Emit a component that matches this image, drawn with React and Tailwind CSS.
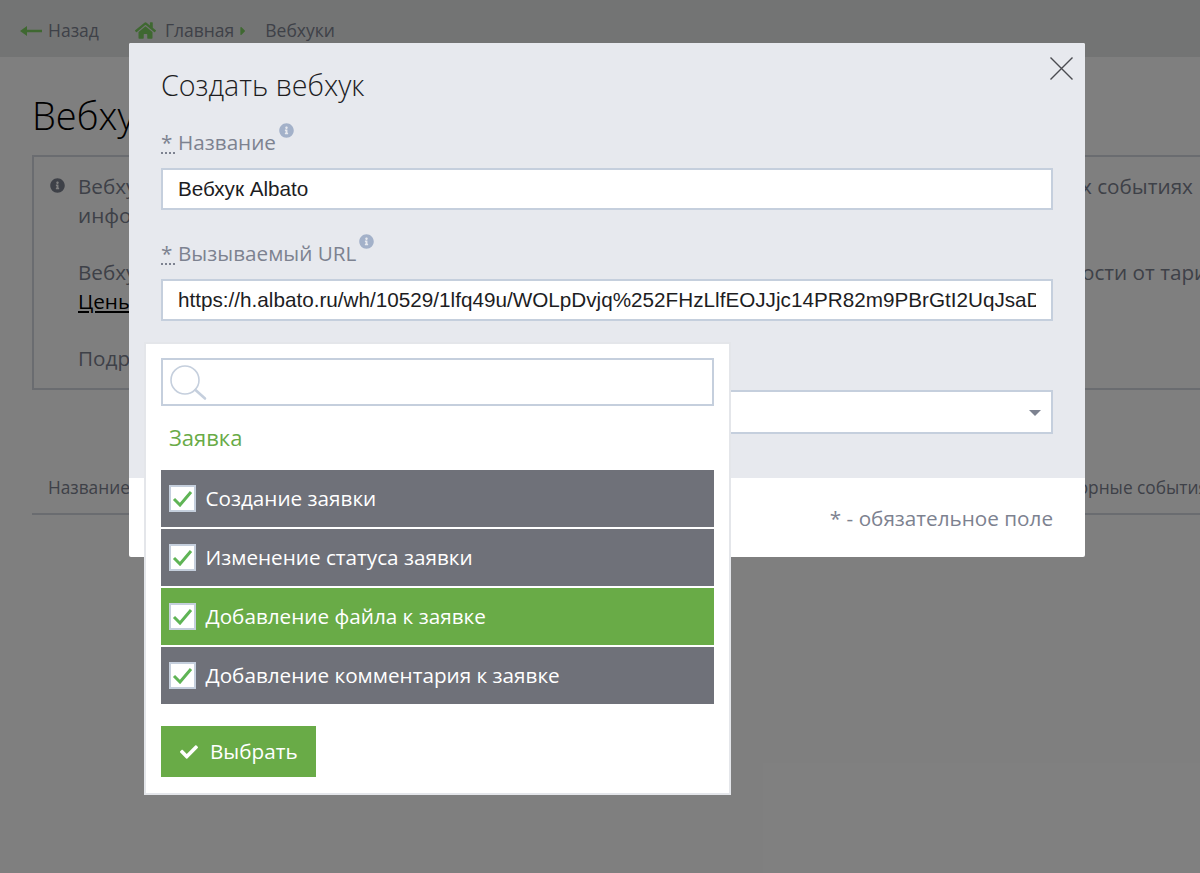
import { FaCaretRight, FaCheck, FaHome, FaInfoCircle } from "react-icons/fa";

const font = "font-['Open_Sans',sans-serif]";
const events = ["Создание заявки", "Изменение статуса заявки", "Добавление файла к заявке", "Добавление комментария к заявке"];

function FieldLabel({ text }) {
  return (
    <div className="flex items-start h-[27px] text-[20.7px] leading-[27px] text-[#7d8290]">
      <span className="w-[14px] h-[25px] mr-[3px] border-b-2 border-dotted border-[#7d8290]">*</span>
      <span>{text}</span>
      <FaInfoCircle className="text-[15px] text-[#a3b1c9] ml-[3px] -mt-[6px]" />
    </div>
  );
}

function TextField({ value }) {
  return (
    <input
      readOnly
      value={value}
      className="block w-full h-[42px] bg-white border-2 border-[#c5cfdd] pl-[15px] pr-[15px] font-['Liberation_Sans',sans-serif] text-[20.7px] text-[#1d1d1f] outline-none"
    />
  );
}

function EventRow({ label, active }) {
  return (
    <div className={`flex items-center h-[57px] pl-[8px] ${active ? "bg-[#69ab47]" : "bg-[#6f7179]"}`}>
      <span className="flex items-center justify-center w-[27px] h-[27px] bg-white border-2 border-[#c5cfdd]">
        <svg width="21" height="17" viewBox="0 0 21 17" fill="none">
          <path d="M2 9l6 6L19 2" stroke="#5fb455" strokeWidth="3" />
        </svg>
      </span>
      <span className="ml-[9.5px] text-[20.7px] text-white">{label}</span>
    </div>
  );
}

function Page() {
  return (
    <div className="h-full bg-white">
      <div className="flex items-center h-[57px] pl-[20px] pt-[4px] bg-[#e7e9e9] text-[17.5px] text-[#7d8290]">
        <svg width="22" height="12" viewBox="0 0 22 12">
          <path d="M0 6l7-5v3.8h15v2.4H7V11z" fill="#7fd163" />
        </svg>
        <span className="ml-[6px]">Назад</span>
        <FaHome className="ml-[36px] text-[21px] text-[#7fd163]" />
        <span className="ml-[9px]">Главная</span>
        <FaCaretRight className="ml-[2px] text-[14px] text-[#7fd163]" />
        <span className="ml-[15px]">Вебхуки</span>
      </div>
      <div className="pl-[32px] pt-[31px]">
        <h1 className="text-[38px] font-light leading-[54px] text-black">Вебхуки</h1>
        <div className="flex mt-[13px] h-[235px] w-[1300px] border-2 border-[#d5d9e0] pl-[16px] pt-[15px] text-[20.7px] leading-[29px] text-[#7d8290]">
          <FaInfoCircle className="mt-[6px] text-[15px] text-[#7d8290]" />
          <div className="ml-[13px] w-[1200px]">
            <div className="flex whitespace-nowrap">
              <span className="w-[1003px]">Вебхуки</span>
              <span>х событиях</span>
            </div>
            <div>информация</div>
            <div className="flex mt-[28px] whitespace-nowrap">
              <span className="w-[1004px]">Вебхуки</span>
              <span>ости от тарифа</span>
            </div>
            <div className="text-black underline">Цены</div>
            <div className="mt-[28px]">Подробнее</div>
          </div>
        </div>
        <div className="flex justify-between mt-[84px] h-[41px] w-[1300px] border-b-2 border-[#d5d9e0] pl-[16px] pt-[1px] text-[17.3px] text-[#7d8290]">
          <span>Название</span>
          <span className="mr-[124px]">Повторные события</span>
        </div>
      </div>
    </div>
  );
}

export default function App() {
  return (
    <div className={`relative w-[1200px] h-[873px] overflow-hidden ${font}`}>
      <Page />
      <div className="absolute inset-0 bg-black/50" />

      <div className="absolute left-[129px] top-[43px] w-[956px] h-[514px] rounded-[2px] bg-white overflow-hidden">
        <div className="h-[435px] bg-[#e7e9ee] px-[32px] pt-[23px]">
          <h2 className="text-[28.6px] font-light leading-[38px] text-[#1d1d1f]">Создать вебхук</h2>
          <div className="mt-[25px]">
            <FieldLabel text="Название" />
          </div>
          <div className="mt-[12px]">
            <TextField value="Вебхук Albato" />
          </div>
          <div className="mt-[30px]">
            <FieldLabel text="Вызываемый URL" />
          </div>
          <div className="mt-[12px]">
            <TextField value="https://h.albato.ru/wh/10529/1lfq49u/WOLpDvjq%252FHzLlfEOJJjc14PR82m9PBrGtI2UqJsaDxkP3vT7" />
          </div>
          <div className="relative mt-[69px] h-[44px] bg-white border-2 border-[#c5cfdd]">
            <span className="absolute right-[10px] top-[18px] border-x-[6px] border-t-[6px] border-x-transparent border-t-[#7d8290]" />
          </div>
        </div>
        <div className="flex justify-end items-center h-[79px] pr-[32px] pt-[2px] text-[20.7px] text-[#7d8290]">
          * - обязательное поле
        </div>
        <svg className="absolute right-[12px] top-[14px]" width="23" height="23" viewBox="0 0 23 23" fill="none">
          <path d="M0.5 0.5l22 22M22.5 0.5l-22 22" stroke="#4a4b50" strokeWidth="1.4" />
        </svg>
      </div>

      <div className="absolute left-[144px] top-[342px] w-[587px] h-[453px] bg-white border-2 border-[#e4e6ea] px-[15px] pt-[14px]">
        <div className="flex items-center h-[48px] border-2 border-[#c5cfdd] pl-[6px]">
          <svg width="38" height="38" viewBox="0 0 38 38" fill="none">
            <circle cx="16" cy="17" r="14" stroke="#c5cfdd" strokeWidth="1.6" />
            <path d="M26.5 27L36 35.5" stroke="#c5cfdd" strokeWidth="2.6" strokeLinecap="round" />
          </svg>
        </div>
        <div className="h-[64px] pl-[8px] pt-[17px] text-[22px] leading-[29px] text-[#69ab47]">Заявка</div>
        <div className="flex flex-col gap-[2px]">
          {events.map((label, i) => (
            <EventRow key={label} label={label} active={i === 2} />
          ))}
        </div>
        <button className="flex items-center mt-[22px] w-[155px] h-[51px] pl-[19px] bg-[#69ab47] text-[20.7px] text-white">
          <FaCheck className="text-[18px]" />
          <span className="ml-[12px]">Выбрать</span>
        </button>
      </div>
    </div>
  );
}
